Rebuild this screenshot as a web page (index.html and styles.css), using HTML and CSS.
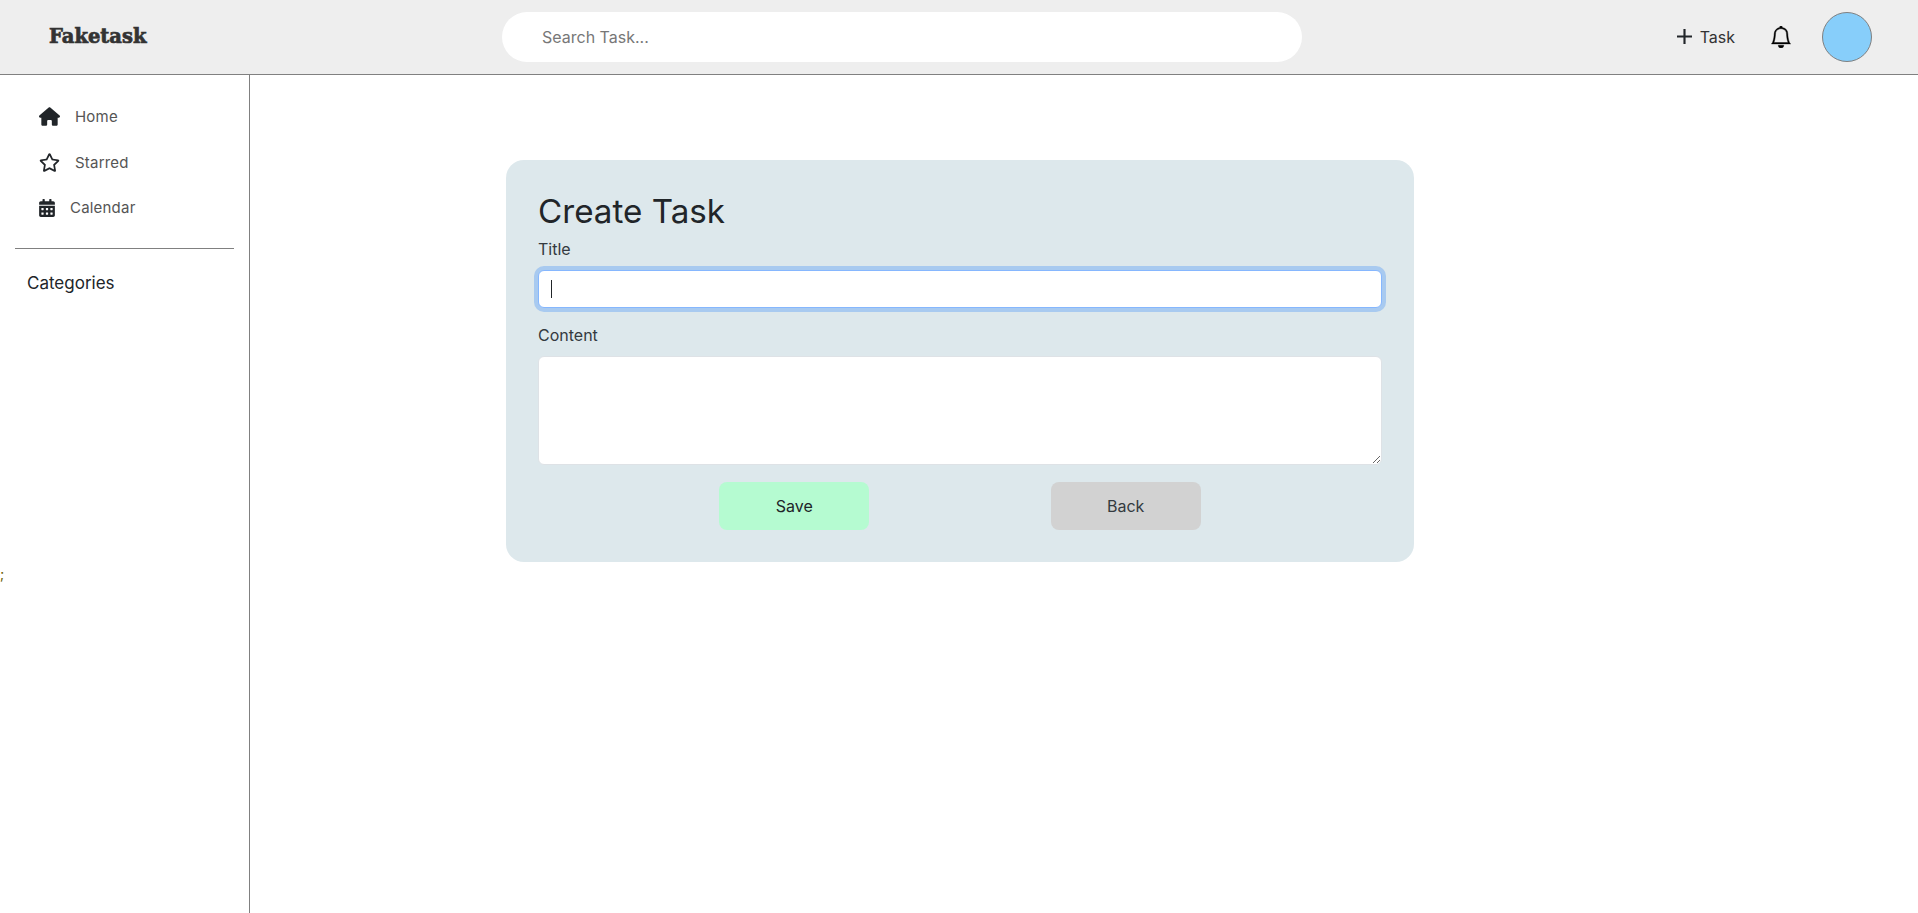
FILE: index.html
```html
<!DOCTYPE html>
<html lang="en">
<head>
  <meta charset="UTF-8" />
  <meta name="viewport" content="width=device-width,initial-scale=1" />
  <title>Faketask</title>
  <link rel="stylesheet" href="styles.css">
</head>
<body>
  <header class="topbar">
    <div class="logo">Faketask</div>
    <input class="search" placeholder="Search Task..." />
    <div class="actions">
      <a class="add-task" href="#">
        <svg class="plus" viewBox="1 1 14 14"><path d="M8 1v14M1 8h14" /></svg>
        Task
      </a>
      <svg class="bell" viewBox="0 0 16 16"><path d="M8 16a2 2 0 0 0 2-2H6a2 2 0 0 0 2 2zM8 1.918l-.797.161A4.002 4.002 0 0 0 4 6c0 .628-.134 2.197-.459 3.742-.16.767-.376 1.566-.663 2.258h10.244c-.287-.692-.502-1.49-.663-2.258C12.134 8.197 12 6.628 12 6a4.002 4.002 0 0 0-3.203-3.92L8 1.917zM14.22 12c.223.447.481.801.78 1H1c.299-.199.557-.553.78-1C2.68 10.2 3 6.88 3 6c0-2.42 1.72-4.44 4.005-4.901a1 1 0 1 1 1.99 0A5.002 5.002 0 0 1 13 6c0 .88.32 4.2 1.22 6z" /></svg>
      <div class="avatar"></div>
    </div>
  </header>

  <div class="layout">
    <aside class="sidebar">
      <nav class="nav">
        <a class="nav-item" href="#">
          <svg class="icon icon-home" viewBox="0 0 576 512"><path d="M575.8 255.5c0 18-15 32.1-32 32.1h-32l.7 160.2c0 2.7-.2 5.4-.5 8.1V472c0 22.1-17.9 40-40 40H456c-1.1 0-2.2 0-3.3-.1c-1.4 .1-2.8 .1-4.2 .1H416 392c-22.1 0-40-17.9-40-40V448 384c0-17.7-14.3-32-32-32H256c-17.7 0-32 14.3-32 32v64 24c0 22.1-17.9 40-40 40H160 128.1c-1.5 0-3-.1-4.5-.2c-1.2 .1-2.4 .2-3.6 .2H104c-22.1 0-40-17.9-40-40V360c0-.9 0-1.9 .1-2.8V287.6H32c-18 0-32-14-32-32.1c0-9 3-17 10-24L266.4 8c7-7 15-8 22-8s15 2 21 7L564.8 231.5c8 7 12 15 11 24z" /></svg>
          Home
        </a>
        <a class="nav-item" href="#">
          <svg class="icon icon-star" viewBox="0 0 576 512"><path d="M528.1 171.5L382 150.2 316.7 17.8c-11.7-23.6-45.6-23.9-57.4 0L194 150.2 47.9 171.5c-26.2 3.8-36.7 36.1-17.7 54.6l105.7 103-25 145.5c-4.5 26.3 23.2 46 46.4 33.7L288 439.6l130.7 68.7c23.2 12.2 50.9-7.4 46.4-33.7l-25-145.5 105.7-103c19-18.5 8.5-50.8-17.7-54.6zM388.6 312.3l23.7 138.4L288 385.4l-124.3 65.3 23.7-138.4-100.6-98 139-20.2 62.2-126 62.2 126 139 20.2-100.6 98z" /></svg>
          Starred
        </a>
        <a class="nav-item" href="#">
          <svg class="icon icon-calendar" viewBox="0 0 448 512"><path d="M0 464c0 26.5 21.5 48 48 48h352c26.5 0 48-21.5 48-48V192H0v272zm320-196c0-6.6 5.4-12 12-12h40c6.6 0 12 5.4 12 12v40c0 6.6-5.4 12-12 12h-40c-6.6 0-12-5.4-12-12v-40zm0 128c0-6.6 5.4-12 12-12h40c6.6 0 12 5.4 12 12v40c0 6.6-5.4 12-12 12h-40c-6.6 0-12-5.4-12-12v-40zM192 268c0-6.6 5.4-12 12-12h40c6.6 0 12 5.4 12 12v40c0 6.6-5.4 12-12 12h-40c-6.6 0-12-5.4-12-12v-40zm0 128c0-6.6 5.4-12 12-12h40c6.6 0 12 5.4 12 12v40c0 6.6-5.4 12-12 12h-40c-6.6 0-12-5.4-12-12v-40zM64 268c0-6.6 5.4-12 12-12h40c6.6 0 12 5.4 12 12v40c0 6.6-5.4 12-12 12H76c-6.6 0-12-5.4-12-12v-40zm0 128c0-6.6 5.4-12 12-12h40c6.6 0 12 5.4 12 12v40c0 6.6-5.4 12-12 12h-40c-6.6 0-12-5.4-12-12v-40zM400 64h-48V16c0-8.8-7.2-16-16-16h-32c-8.8 0-16 7.2-16 16v48H160V16c0-8.8-7.2-16-16-16h-32c-8.8 0-16 7.2-16 16v48H48C21.5 64 0 85.5 0 112v48h448v-48c0-26.5-21.5-48-48-48z" /></svg>
          Calendar
        </a>
      </nav>
      <hr class="divider" />
      <div class="categories">Categories</div>
      <div class="stray">;</div>
    </aside>

    <main class="content">
      <form class="card">
        <h2 class="card-title">Create Task</h2>
        <label class="field-label" for="title">Title</label>
        <div class="field-wrap">
          <input class="field field-focus" id="title" />
          <span class="caret"></span>
        </div>
        <label class="field-label" for="body">Content</label>
        <textarea class="field field-area" id="body"></textarea>
        <div class="buttons">
          <button class="btn btn-save" type="submit">Save</button>
          <button class="btn btn-back" type="button">Back</button>
        </div>
      </form>
    </main>
  </div>
</body>
</html>
```

FILE: styles.css
```css
* { box-sizing: border-box; }
body { margin: 0; height: 100vh; display: flex; flex-direction: column; overflow: hidden; font-family: Inter, "Open Sans", sans-serif; color: #212529; background: #fff; }
a { text-decoration: none; color: inherit; }

/* top bar */
.topbar { flex: none; height: 75px; display: flex; align-items: center; background: #eee; border-bottom: 1px solid #808080; padding-bottom: 1px; }
.logo { width: 502px; padding-left: 49px; font-family: "DejaVu Serif", serif; font-weight: 700; font-size: 19.5px; color: #333; -webkit-text-stroke: 0.7px #333; }
.search { width: 800px; height: 50px; border: none; border-radius: 25px; padding: 0 40px; font: 16px Inter, sans-serif; outline: none; background: #fff; }
.search::placeholder { color: #777; opacity: 1; }
.actions { margin-left: auto; display: flex; align-items: center; padding-right: 46px; }
.add-task { display: flex; align-items: center; gap: 8px; font-size: 16px; color: #333; }
.plus { width: 15px; height: 15px; fill: none; stroke: #212529; stroke-width: 2; }
.bell { width: 22px; height: 22px; margin-left: 35px; fill: #000; stroke: #000; stroke-width: 0.3; }
.avatar { width: 50px; height: 50px; margin-left: 30px; border-radius: 50%; background: #87cefa; border: 1px solid #808080; }

/* sidebar */
.layout { flex: 1; display: flex; min-height: 0; }
.sidebar { flex: none; width: 250px; border-right: 1px solid #808080; padding: 19px 15px 0; }
.nav { display: flex; flex-direction: column; }
.nav-item { height: 45.5px; display: flex; align-items: center; padding-left: 24px; font-size: 15px; letter-spacing: 0.2px; color: #555; }
.icon { fill: #212529; flex: none; }
.icon-home { width: 21px; height: 19px; margin-right: 15px; }
.icon-star { width: 21px; height: 19px; margin-right: 15px; }
.icon-calendar { width: 16px; height: 18px; margin-right: 15px; }
.divider { margin: 17.5px 0 0; border: none; border-top: 1px solid #808080; }
.categories { margin: 23.5px 0 0 12px; font-size: 17px; }
.stray { margin: 272px 0 0 -15px; font-size: 14px; color: #6a5d00; }

/* form card */
.content { flex: 1; padding: 85px 0 0 256px; }
.card { width: 908px; height: 402px; padding: 32px 32px 0; background: #dde8ec; border-radius: 18px; }
.card-title { margin: 0 0 8px; font-size: 33.2px; line-height: 38px; font-weight: 400; }
.field-label { display: block; height: 24px; margin-bottom: 8px; font-size: 16px; line-height: 23px; color: #343a40; }
.field-wrap { position: relative; margin-bottom: 16px; }
.field { display: block; width: 844px; background: #fff; border: 1px solid #ced4da; border-radius: 6px; padding: 6px 12px; font: 16px Inter, sans-serif; outline: none; }
.field-focus { height: 38px; border-color: #86b7fe; box-shadow: 0 0 0 4px rgba(13, 110, 253, 0.25); caret-color: transparent; }
.caret { position: absolute; left: 13px; top: 10px; width: 1px; height: 18px; background: #212529; }
.field-area { height: 109px; border-color: #dee2e6; }
.buttons { display: flex; justify-content: space-evenly; margin-top: 17px; }
.btn { width: 150px; height: 48px; border: none; border-radius: 8px; font: 16px Inter, sans-serif; }
.btn-save { background: #b5fbd1; color: #212529; }
.btn-back { background: #d2d2d2; color: #343a40; }
```
